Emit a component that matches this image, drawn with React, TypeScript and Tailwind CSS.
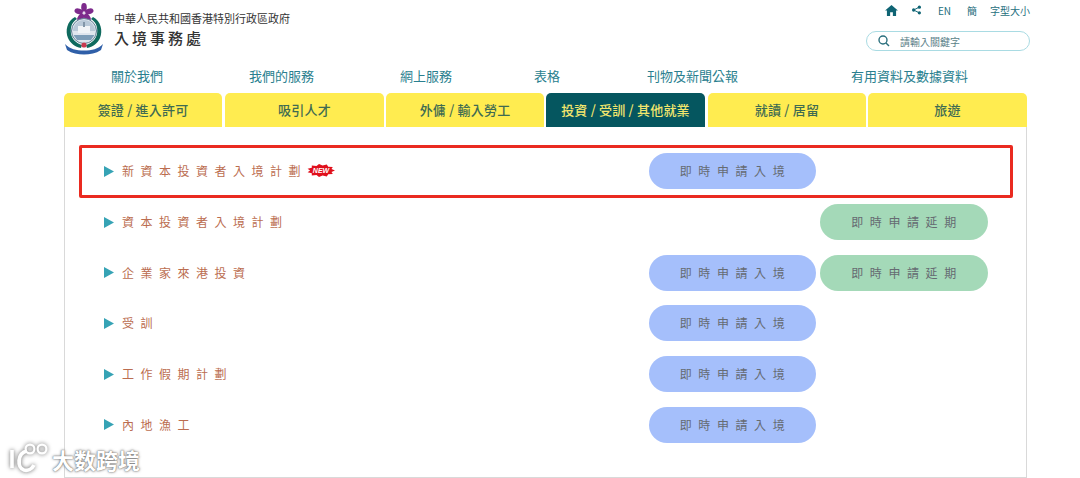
const cjk = "font-['Noto_Sans_CJK_TC','Liberation_Sans',sans-serif]";

const topNav = [
  { label: "關於我們", cls: "ml-[47px]" },
  { label: "我們的服務", cls: "ml-[86px]" },
  { label: "網上服務", cls: "ml-[86px]" },
  { label: "表格", cls: "ml-[82px]" },
  { label: "刊物及新聞公報", cls: "ml-[87px]" },
  { label: "有用資料及數據資料", cls: "ml-[113px]" },
];

const tabs = [
  { label: "簽證 / 進入許可", cls: "w-[158px] mr-[3px]", active: false },
  { label: "吸引人才", cls: "w-[159px] mr-[2px]", active: false },
  { label: "外傭 / 輸入勞工", cls: "w-[158px] mr-[2px]", active: false },
  { label: "投資 / 受訓 / 其他就業", cls: "w-[159px] mr-[3px]", active: true },
  { label: "就讀 / 居留", cls: "w-[158px] mr-[2px]", active: false },
  { label: "旅遊", cls: "w-[159px]", active: false },
];

const rows = [
  { label: "新資本投資者入境計劃", enter: true, extend: false, isNew: true },
  { label: "資本投資者入境計劃", enter: false, extend: true, isNew: false },
  { label: "企業家來港投資", enter: true, extend: true, isNew: false },
  { label: "受訓", enter: true, extend: false, isNew: false },
  { label: "工作假期計劃", enter: true, extend: false, isNew: false },
  { label: "內地漁工", enter: true, extend: false, isNew: false },
];

function Emblem() {
  return (
    <svg width="40" height="52" viewBox="0 0 40 52">
      <g fill="#7d2a8c">
        <ellipse cx="20" cy="4.5" rx="2.8" ry="4.4" />
        <ellipse cx="20" cy="4.5" rx="2.8" ry="4.4" transform="rotate(72 20 10)" />
        <ellipse cx="20" cy="4.5" rx="2.8" ry="4.4" transform="rotate(144 20 10)" />
        <ellipse cx="20" cy="4.5" rx="2.8" ry="4.4" transform="rotate(216 20 10)" />
        <ellipse cx="20" cy="4.5" rx="2.8" ry="4.4" transform="rotate(288 20 10)" />
      </g>
      <circle cx="20" cy="10" r="1.4" fill="#e6d9ee" />
      <path d="M11 14 C3 18 1 28 4 35 C6 40 11 44 17 45 L18 42 C12 40 8 36 7 31 C6 24 8 19 13 16 Z" fill="#0f6a5e" />
      <path d="M29 14 C37 18 39 28 36 35 C34 40 29 44 23 45 L22 42 C28 40 32 36 33 31 C34 24 32 19 27 16 Z" fill="#0f6a5e" />
      <circle cx="20" cy="28" r="12.5" fill="#dfe6ee" stroke="#5f7d92" strokeWidth="1" />
      <path d="M9 28 A11 11 0 0 1 31 28 Z" fill="#b9c9d8" />
      <rect x="14" y="23" width="12" height="7" fill="#f1f4f7" />
      <rect x="19" y="19" width="2" height="5" fill="#8296a8" />
      <path d="M9.5 32 H30.5 L27 37 H13 Z" fill="#7d9db8" />
      <circle cx="20" cy="42" r="2.6" fill="#c83a50" />
      <path d="M1 41 C6 46 12 47.5 20 47.5 C28 47.5 34 46 39 41 L37 47 C32 50.5 26 51.5 20 51.5 C14 51.5 8 50.5 3 47 Z" fill="#2f5fa8" />
    </svg>
  );
}

function NewBadge() {
  const pts: string[] = [];
  const n = 22;
  for (let i = 0; i < n; i++) {
    const a = (i / n) * Math.PI * 2;
    const k = i % 2 === 0 ? 1 : 0.78;
    pts.push(`${(14 + 14 * k * Math.cos(a)).toFixed(1)},${(6.5 + 6.5 * k * Math.sin(a)).toFixed(1)}`);
  }
  return (
    <svg width="28" height="13" viewBox="0 0 28 13" className="mb-[2px]">
      <polygon points={pts.join(" ")} fill="#e0101c" />
      <text x="14" y="9" textAnchor="middle" fontSize="7" fontWeight="700" fontStyle="italic" fill="#fff" fontFamily="Liberation Sans, sans-serif">NEW</text>
    </svg>
  );
}

function Pill({ text, tone }: { text: string; tone: "blue" | "green" }) {
  return (
    <div
      className={`flex h-9 items-center justify-center rounded-[18px] pl-[6px] text-[12px] tracking-[6.6px] text-[#666b72] ${
        tone === "blue" ? "w-[167px] bg-[#a5bffb]" : "w-[168px] bg-[#a4d9b8]"
      }`}
    >
      {text}
    </div>
  );
}

export default function App() {
  return (
    <div className={`relative h-[478px] w-[1080px] overflow-hidden bg-white ${cjk}`}>
      <header className="flex h-[68px] pl-[64px]">
        <div className="pt-[3px]">
          <Emblem />
        </div>
        <div className="ml-[10px] flex flex-col pt-[11px]">
          <div className="text-[11px] leading-[15px] text-[#333]">中華人民共和國香港特別行政區政府</div>
          <div className="mt-[2px] text-[15px] font-medium leading-[20px] tracking-[3px] text-[#333]">入境事務處</div>
        </div>
        <div className="ml-auto flex w-[214px] flex-col items-end pr-[50px]">
          <div className="mt-[3px] flex h-[14px] items-center text-[#1f6f80]">
            <svg width="13" height="11" viewBox="0 0 14 12" className="mr-[14px]">
              <path d="M7 0 L14 6 H12 V12 H8.5 V8 H5.5 V12 H2 V6 H0 Z" fill="#0f6474" />
            </svg>
            <svg width="9" height="10" viewBox="0 0 11 11" className="mr-[17px]">
              <circle cx="2" cy="5.5" r="2" fill="#0f6474" />
              <circle cx="9" cy="2" r="2" fill="#0f6474" />
              <circle cx="9" cy="9" r="2" fill="#0f6474" />
              <path d="M2 5.5 L9 2 M2 5.5 L9 9" stroke="#0f6474" strokeWidth="1.2" />
            </svg>
            <span className="mr-[16px] text-[10px]">EN</span>
            <span className="mr-[13px] text-[10px]">簡</span>
            <span className="text-[10px]">字型大小</span>
          </div>
          <div className="mt-[14px] flex h-[20px] w-[164px] items-center rounded-[10px] border border-[#a9dbe3] pl-[11px]">
            <svg width="12" height="12" viewBox="0 0 12 12" fill="none" stroke="#2a6f7d" strokeWidth="1.4">
              <circle cx="5" cy="5" r="4" />
              <path d="M8 8 L11 11" />
            </svg>
            <span className="ml-[10px] text-[10px] text-[#5b7f88]">請輸入關鍵字</span>
          </div>
        </div>
      </header>

      <nav className="mb-[9px] flex h-[16px] items-center pl-[64px] text-[13px] leading-[16px] text-[#2a7f8f]">
        {topNav.map((item) => (
          <span key={item.label} className={item.cls}>
            {item.label}
          </span>
        ))}
      </nav>

      <div className="flex h-[34px] pl-[64px]">
        {tabs.map((t) => (
          <div
            key={t.label}
            className={`flex items-center justify-center rounded-t-[5px] text-[13px] font-medium tracking-[0.2px] ${t.cls} ${
              t.active ? "bg-[#05565f] text-[#f3e66d]" : "bg-[#ffec50] text-[#3f6b52]"
            }`}
          >
            {t.label}
          </div>
        ))}
      </div>

      <main className="ml-[64px] h-[351px] w-[963px] border border-t-0 border-[#d9d9d9] pl-[39px] pt-[19px]">
        {rows.map((r) => (
          <div key={r.label} className="grid h-[50.7px] grid-cols-[541px_167px_168px] items-center gap-x-[4px]">
            <div className="flex items-center">
              <svg width="10" height="11" viewBox="0 0 10 11">
                <path d="M0 0 L10 5.5 L0 11 Z" fill="#36a3b5" />
              </svg>
              <span className="ml-[8px] text-[12px] tracking-[6.5px] text-[#bb6d50]">{r.label}</span>
              {r.isNew && <NewBadge />}
            </div>
            <div>{r.enter && <Pill text="即時申請入境" tone="blue" />}</div>
            <div>{r.extend && <Pill text="即時申請延期" tone="green" />}</div>
          </div>
        ))}
      </main>

      <div className="absolute left-[79px] top-[145px] h-[53px] w-[934px] rounded-[2px] border-[3px] border-[#ea2a20]" />

      <div className="absolute left-[9px] top-[443px] flex items-center text-white [text-shadow:0_0_3px_#666,0_0_1px_#666]">
        <svg width="42" height="30" viewBox="0 0 42 30" fill="none" stroke="#fff" className="drop-shadow-[0_0_2px_#666]">
          <path d="M3 7 V25" strokeWidth="3.6" />
          <path d="M18 8 C8 10 8 25 15 27 C19 28 23 26 25 22" strokeWidth="3.8" />
          <circle cx="21" cy="6" r="4.4" strokeWidth="2.2" />
          <circle cx="33" cy="6" r="4.4" strokeWidth="2.2" />
        </svg>
        <span className="ml-[1px] mt-[2px] font-['Noto_Sans_CJK_SC',sans-serif] text-[22px] font-bold leading-[26px]">大数跨境</span>
      </div>
    </div>
  );
}
